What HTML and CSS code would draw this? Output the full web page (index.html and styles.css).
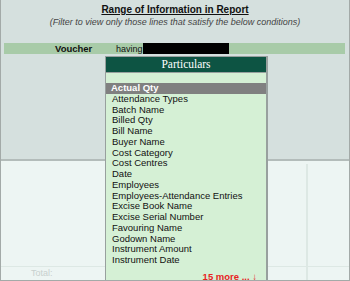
FILE: index.html
```html
<!DOCTYPE html>
<html>
<head>
  <meta charset="UTF-8">
  <title>Range of Information</title>
  <link rel="stylesheet" href="styles.css">
</head>
<body>
  <div id="screen">
    <div class="top">
      <h1 class="title">Range of Information in Report</h1>
      <p class="sub">(Filter to view only those lines that satisfy the below conditions)</p>
      <div class="bar">
        <span class="what">Voucher</span>
        <span class="having">having</span>
        <span class="value"></span>
      </div>
    </div>
    <div class="bottom">
      <div class="cols">
        <div class="col main"></div>
        <div class="col"></div>
        <div class="col last"></div>
      </div>
      <div class="total">
        <div class="col main">Total:</div>
        <div class="col"></div>
        <div class="col last"></div>
      </div>
    </div>

    <div class="list">
      <div class="head">Particulars</div>
      <div class="search"></div>
      <ul>
        <li class="on">Actual Qty</li>
        <li>Attendance Types</li>
        <li>Batch Name</li>
        <li>Billed Qty</li>
        <li>Bill Name</li>
        <li>Buyer Name</li>
        <li>Cost Category</li>
        <li>Cost Centres</li>
        <li>Date</li>
        <li>Employees</li>
        <li>Employees-Attendance Entries</li>
        <li>Excise Book Name</li>
        <li>Excise Serial Number</li>
        <li>Favouring Name</li>
        <li>Godown Name</li>
        <li>Instrument Amount</li>
        <li>Instrument Date</li>
      </ul>
      <div class="more">15 more ... <span class="arr">&#8595;</span></div>
    </div>
  </div>
</body>
</html>
```

FILE: styles.css
```css
* {
  margin: 0;
  padding: 0;
}
body {
  font-family: "Liberation Sans", Arial, sans-serif;
}
#screen {
  position: relative;
  width: 348px;
  height: 280px;
  border-left: 1px solid #a3aaa8;
  border-right: 1px solid #a3aaa8;
  border-bottom: 1px solid #a3aaa8;
  display: flex;
  flex-direction: column;
  overflow: hidden;
}
.top {
  height: 161px;
  background: #d5e0de;
  border-bottom: 2px solid #b3bcba;
  padding-top: 4px;
  box-sizing: border-box;
}
.title {
  text-align: center;
  font-size: 10px;
  font-weight: bold;
  text-decoration: underline;
  line-height: 12px;
  color: #111;
}
.sub {
  text-align: center;
  font-size: 9px;
  font-style: italic;
  color: #444;
  line-height: 11px;
  margin-top: 1px;
}
.bar {
  margin: 15px 4px 0 3px;
  height: 11px;
  background: #a8cba8;
  display: flex;
  align-items: center;
  font-size: 9.5px;
  color: #111;
}
.bar .what {
  font-weight: bold;
  margin-left: 51px;
  width: 61px;
}
.bar .having {
  width: 27px;
  font-size: 9px;
  white-space: nowrap;
}
.bar .value {
  width: 86px;
  height: 11px;
  background: #000;
}
.bottom {
  flex: 1;
  background: #edf5f3;
  display: flex;
  flex-direction: column;
}
.cols, .total {
  display: flex;
}
.cols {
  flex: 1;
  padding-top: 3px;
}
.total {
  height: 13px;
  border-top: 1px solid #dde8e4;
  font-size: 9px;
  line-height: 13px;
  color: #c8d0ce;
}
.col {
  width: 40px;
  border-right: 2px solid #dde8e4;
}
.col.main {
  width: 265px;
  padding-left: 30px;
  box-sizing: border-box;
}
.col.last {
  flex: 1;
  border-right: 0;
}
.list {
  position: absolute;
  left: 104px;
  top: 56px;
  width: 160px;
  height: 224px;
  border: 1px solid #98a09e;
  border-right-width: 2px;
  border-bottom: 0;
  background: #d5f0d5;
}
.list .head {
  height: 15px;
  background: #0d5443;
  color: #fff;
  font-family: "Liberation Serif", "Times New Roman", serif;
  font-size: 11.5px;
  line-height: 15px;
  text-align: center;
  border-bottom: 1px solid #98a09e;
}
.list .search {
  height: 10px;
}
.list ul {
  list-style: none;
}
.list li {
  font-size: 9.5px;
  line-height: 10.75px;
  padding-left: 6px;
  color: #111;
}
.list li.on {
  background: #808080;
  color: #fff;
  font-weight: bold;
  padding-left: 5px;
}
.list .more {
  margin-top: 5px;
  text-align: right;
  padding-right: 9px;
  font-size: 9.5px;
  font-weight: bold;
  color: #e8231f;
}
.list .more .arr {
  font-weight: normal;
}
```
